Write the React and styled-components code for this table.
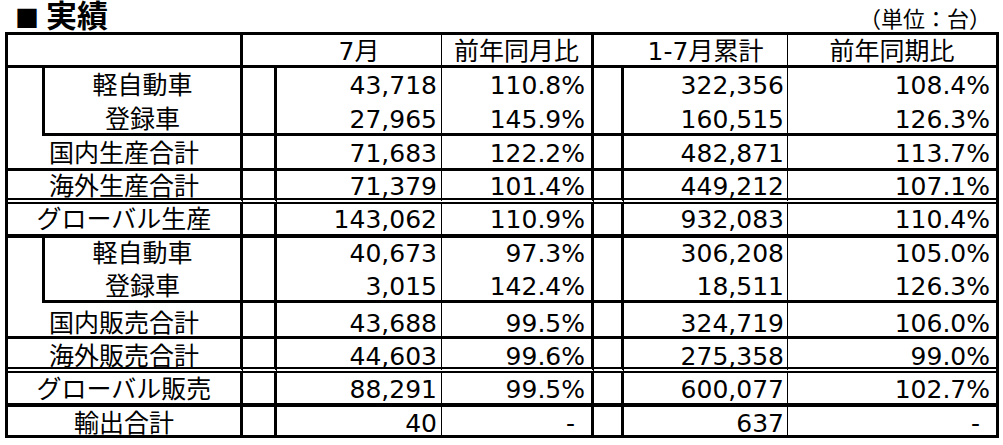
import React from "react";
import styled, { createGlobalStyle } from "styled-components";

const GlobalStyle = createGlobalStyle`
  body {
    margin: 0;
    background: #fff;
  }
`;

const COLS = "235px 34px 165px 152px 30px 164px 208px";

const LINES = {
  none: "0 none",
  thick: "3px solid #000",
  heavy: "4px solid #000",
  double: "6px double #000",
};

const Page = styled.div`
  width: 1003px;
  height: 445px;
  overflow: hidden;
  background: #fff;
  color: #000;
`;

const TitleBar = styled.div`
  display: flex;
  justify-content: space-between;
  align-items: flex-end;
  height: 32px;
  padding: 0 12px 0 15px;
`;

const Heading = styled.h2`
  margin: 0;
  font-family: "Noto Sans CJK JP", sans-serif;
  font-weight: 700;
  font-size: 31px;
  line-height: 30px;
`;

const Bullet = styled.span`
  font-size: 24px;
  margin-right: 7px;
`;

const Unit = styled.span`
  font-family: "Noto Sans CJK JP", sans-serif;
  font-size: 22px;
  line-height: 22px;
  padding-bottom: 4px;
`;

const Sheet = styled.div`
  box-sizing: border-box;
  width: 994px;
  margin-left: 5px;
  border: 3px solid #000;
  font-family: "DejaVu Sans", "Noto Sans CJK JP", sans-serif;
  font-size: 25px;
  line-height: 20px;
`;

const Row = styled.div`
  display: grid;
  grid-template-columns: ${COLS};
  height: ${({ $h }) => $h}px;
  --line: ${({ $line }) => LINES[$line]};
  --pb: ${({ $pb }) => $pb}px;
`;

const Cell = styled.div`
  box-sizing: border-box;
  display: flex;
  align-items: flex-end;
  justify-content: ${({ $center }) => ($center ? "center" : "flex-end")};
  padding: 0 ${({ $pr }) => $pr || 0}px var(--pb) 0;
  border-right: ${({ $edge }) => $edge || 0}px solid #000;
  border-bottom: var(--line);
  white-space: nowrap;
`;

const GroupCell = styled.div`
  box-sizing: border-box;
  display: flex;
  padding-left: 34px;
  border-right: 3px solid #000;
`;

const SubLabel = styled.div`
  flex: 1;
  display: flex;
  align-items: flex-end;
  justify-content: center;
  padding-bottom: var(--pb);
  border-left: 3px solid #000;
  border-bottom: var(--line);
  white-space: nowrap;
`;

const rows = [
  { label: "軽自動車", sub: true, m: "43,718", my: "110.8%", c: "322,356", cy: "108.4%", h: 32, line: "none", pb: 4.5 },
  { label: "登録車", sub: true, m: "27,965", my: "145.9%", c: "160,515", cy: "126.3%", h: 36, line: "thick", pb: 3.5 },
  { label: "国内生産合計", m: "71,683", my: "122.2%", c: "482,871", cy: "113.7%", h: 35, line: "thick", pb: 4.5 },
  { label: "海外生産合計", m: "71,379", my: "101.4%", c: "449,212", cy: "107.1%", h: 33, line: "double", pb: 1 },
  { label: "グローバル生産", m: "143,062", my: "110.9%", c: "932,083", cy: "110.4%", h: 34, line: "heavy", pb: 4 },
  { label: "軽自動車", sub: true, m: "40,673", my: "97.3%", c: "306,208", cy: "105.0%", h: 31, line: "none", pb: 5.5 },
  { label: "登録車", sub: true, m: "3,015", my: "142.4%", c: "18,511", cy: "126.3%", h: 34, line: "thick", pb: 3 },
  { label: "国内販売合計", m: "43,688", my: "99.5%", c: "324,719", cy: "106.0%", h: 36, line: "thick", pb: 2.5 },
  { label: "海外販売合計", m: "44,603", my: "99.6%", c: "275,358", cy: "99.0%", h: 34, line: "double", pb: 0.5 },
  { label: "グローバル販売", m: "88,291", my: "99.5%", c: "600,077", cy: "102.7%", h: 34, line: "heavy", pb: 3 },
  { label: "輸出合計", m: "40", my: "-", c: "637", cy: "-", h: 28, line: "none", pb: 1.5 },
];

const pctPad = (v) => (v === "-" ? 16 : 6);

const DataRow = ({ row }) => (
  <Row $h={row.h} $line={row.line} $pb={row.pb}>
    {row.sub ? (
      <GroupCell>
        <SubLabel>{row.label}</SubLabel>
      </GroupCell>
    ) : (
      <Cell $center $edge={3}>{row.label}</Cell>
    )}
    <Cell $edge={3} />
    <Cell $edge={1} $pr={4}>{row.m}</Cell>
    <Cell $edge={3} $pr={pctPad(row.my)}>{row.my}</Cell>
    <Cell $edge={3} />
    <Cell $edge={1} $pr={3}>{row.c}</Cell>
    <Cell $pr={pctPad(row.cy)}>{row.cy}</Cell>
  </Row>
);

export default function App() {
  return (
    <Page>
      <GlobalStyle />
      <TitleBar>
        <Heading>
          <Bullet>■</Bullet>実績
        </Heading>
        <Unit>（単位：台）</Unit>
      </TitleBar>
      <Sheet>
        <Row $h={33} $line="thick" $pb={3.5}>
          <Cell $edge={3} />
          <Cell />
          <Cell $center $edge={1}>7月</Cell>
          <Cell $center $edge={3}>前年同月比</Cell>
          <Cell />
          <Cell $center $edge={1}>1-7月累計</Cell>
          <Cell $center>前年同期比</Cell>
        </Row>
        {rows.map((row, i) => (
          <DataRow key={i} row={row} />
        ))}
      </Sheet>
    </Page>
  );
}
